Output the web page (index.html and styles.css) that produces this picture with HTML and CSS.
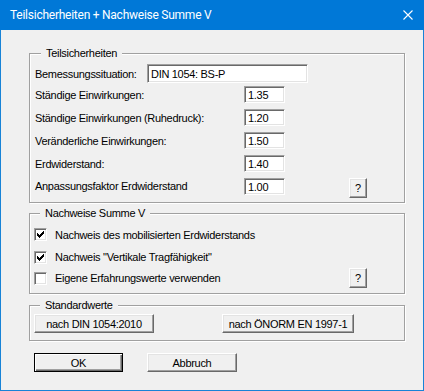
FILE: index.html
```html
<!DOCTYPE html>
<html lang="de">
<head>
<meta charset="utf-8">
<title>Teilsicherheiten + Nachweise Summe V</title>
<link rel="stylesheet" href="styles.css">
</head>
<body>
<div class="window">
  <div class="titlebar">
    <span class="title">Teilsicherheiten + Nachweise Summe V</span>
    <svg class="close" width="10" height="10" viewBox="0 0 10 10"><path d="M0.5 0.5L9.5 9.5M9.5 0.5L0.5 9.5" stroke="#fff" stroke-width="1.1" fill="none"/></svg>
  </div>
  <div class="content">
    <fieldset class="group g1">
      <legend>Teilsicherheiten</legend>
      <div class="row r-first">
        <span class="label lw-short">Bemessungssituation:</span>
        <span class="edit wide">DIN 1054: BS-P</span>
      </div>
      <div class="row r-second">
        <span class="label lw-long">Ständige Einwirkungen:</span>
        <span class="edit num">1.35</span>
      </div>
      <div class="row">
        <span class="label lw-long">Ständige Einwirkungen (Ruhedruck):</span>
        <span class="edit num">1.20</span>
      </div>
      <div class="row">
        <span class="label lw-long">Veränderliche Einwirkungen:</span>
        <span class="edit num">1.50</span>
      </div>
      <div class="row">
        <span class="label lw-long">Erdwiderstand:</span>
        <span class="edit num">1.40</span>
      </div>
      <div class="row r-last">
        <span class="label lw-long">Anpassungsfaktor Erdwiderstand</span>
        <span class="edit num">1.00</span>
        <span class="btn help">?</span>
      </div>
    </fieldset>

    <fieldset class="group g2">
      <legend>Nachweise Summe V</legend>
      <div class="crow c1">
        <span class="check"><svg width="7" height="7" viewBox="0 0 7 7"><path d="M0 2h1v1h1v1h1v-1h1v-1h1v-1h1v-1h1v3h-1v1h-1v1h-1v1h-1v1h-1v-1h-1v-1h-1z" fill="#000"/></svg></span>
        <span class="clabel">Nachweis des mobilisierten Erdwiderstands</span>
      </div>
      <div class="crow c2">
        <span class="check"><svg width="7" height="7" viewBox="0 0 7 7"><path d="M0 2h1v1h1v1h1v-1h1v-1h1v-1h1v-1h1v3h-1v1h-1v1h-1v1h-1v1h-1v-1h-1v-1h-1z" fill="#000"/></svg></span>
        <span class="clabel">Nachweis "Vertikale Tragfähigkeit"</span>
      </div>
      <div class="crow c3">
        <span class="check"></span>
        <span class="clabel cl-wide">Eigene Erfahrungswerte verwenden</span>
        <span class="btn help">?</span>
      </div>
    </fieldset>

    <fieldset class="group g3">
      <legend>Standardwerte</legend>
      <div class="brow">
        <span class="btn std1">nach DIN 1054:2010</span>
        <span class="btn std2">nach ÖNORM EN 1997-1</span>
      </div>
    </fieldset>

    <div class="actions">
      <span class="btn default ok">OK</span>
      <span class="btn cancel">Abbruch</span>
    </div>
  </div>
</div>
</body>
</html>
```
FILE: styles.css
```css
html, body {
  margin: 0;
  padding: 0;
  background: #f0f0f0;
}

.window {
  width: 424px;
  height: 391px;
  box-sizing: border-box;
  border: 1px solid #1883d7;
  border-top: none;
  background: #f0f0f0;
  font-family: "Liberation Sans", Arial, sans-serif;
  font-size: 11px;
  letter-spacing: -0.3px;
  color: #000;
}

.titlebar {
  height: 30px;
  margin: 0 -1px;
  background: #0078d7;
  color: #fff;
  display: flex;
  align-items: center;
  justify-content: space-between;
  padding: 0 11px 0 10px;
  font-family: Roboto, "Noto Sans", sans-serif;
  font-size: 12px;
  letter-spacing: -0.25px;
}

.title {
  line-height: 16px;
  margin-top: -1px;
}

.close {
  display: block;
}

.content {
  padding: 17px 18px 0 28px;
}

.group {
  margin: 0;
  padding: 0 4px 0 5px;
  border: 1px solid #a0a0a0;
  box-shadow: inset 1px 1px 0 #fff, 1px 1px 0 #fff;
  min-width: 0;
}

.group legend {
  margin-left: 6px;
  padding: 0 5px 0 5px;
  line-height: 13px;
  background: #f0f0f0;
}

.g1 {
  padding-top: 4px;
  padding-bottom: 4px;
}

.g2 {
  margin-top: 4px;
  padding-top: 3px;
  padding-bottom: 5px;
  padding-left: 4px;
}

.g3 {
  margin-top: 5px;
  padding-top: 2px;
  padding-bottom: 7px;
  padding-left: 4px;
}

.row {
  display: flex;
  align-items: center;
  height: 17px;
  margin-top: 6px;
}

.r-first {
  height: 19px;
  margin-top: 0;
}

.r-second {
  margin-top: 3px;
}

.r-last {
  align-items: flex-start;
  height: 20px;
}

.r-last .label {
  line-height: 17px;
}

.label {
  white-space: nowrap;
}

.lw-short { width: 112px; }
.lw-long { width: 209px; }

.edit {
  box-sizing: border-box;
  background: #fff;
  border: 1px solid;
  border-color: #a0a0a0 #fff #fff #a0a0a0;
  box-shadow: inset 1px 1px 0 #696969, inset -1px -1px 0 #e3e3e3;
  padding: 0 3px;
  display: flex;
  align-items: center;
  white-space: nowrap;
}

.wide {
  width: 161px;
  height: 19px;
}

.num {
  width: 41px;
  height: 17px;
}

.btn {
  box-sizing: border-box;
  display: inline-flex;
  align-items: center;
  justify-content: center;
  background: #f0f0f0;
  border: 1px solid;
  border-color: #fff #696969 #696969 #fff;
  box-shadow: inset -1px -1px 0 #a0a0a0, inset 1px 1px 0 #e3e3e3;
  white-space: nowrap;
}

.help {
  width: 18px;
  height: 20px;
  margin-left: 64px;
}

.crow {
  display: flex;
  align-items: center;
  height: 23px;
}

.c2 { height: 22px; }
.c3 { height: 20px; }

.check {
  box-sizing: border-box;
  width: 13px;
  height: 13px;
  flex: none;
  background: #fff;
  border: 1px solid;
  border-color: #a0a0a0 #fff #fff #a0a0a0;
  box-shadow: inset 1px 1px 0 #696969, inset -1px -1px 0 #e3e3e3;
  padding: 2px;
}

.check svg {
  display: block;
}

.clabel {
  margin-left: 8px;
  white-space: nowrap;
}

.cl-wide {
  width: 238px;
}

.c3 .help {
  margin-left: 56px;
}

.brow {
  display: flex;
}

.std1 {
  width: 120px;
  height: 19px;
}

.std2 {
  width: 132px;
  height: 19px;
  margin-left: 68px;
}

.actions {
  display: flex;
  margin-top: 12px;
  padding-left: 5px;
}

.ok {
  width: 89px;
  height: 19px;
}

.default {
  border: 1px solid #000;
  box-shadow: inset 1px 1px 0 #fff, inset -1px -1px 0 #696969, inset -2px -2px 0 #a0a0a0;
}

.cancel {
  width: 90px;
  height: 19px;
  margin-left: 24px;
}
```
